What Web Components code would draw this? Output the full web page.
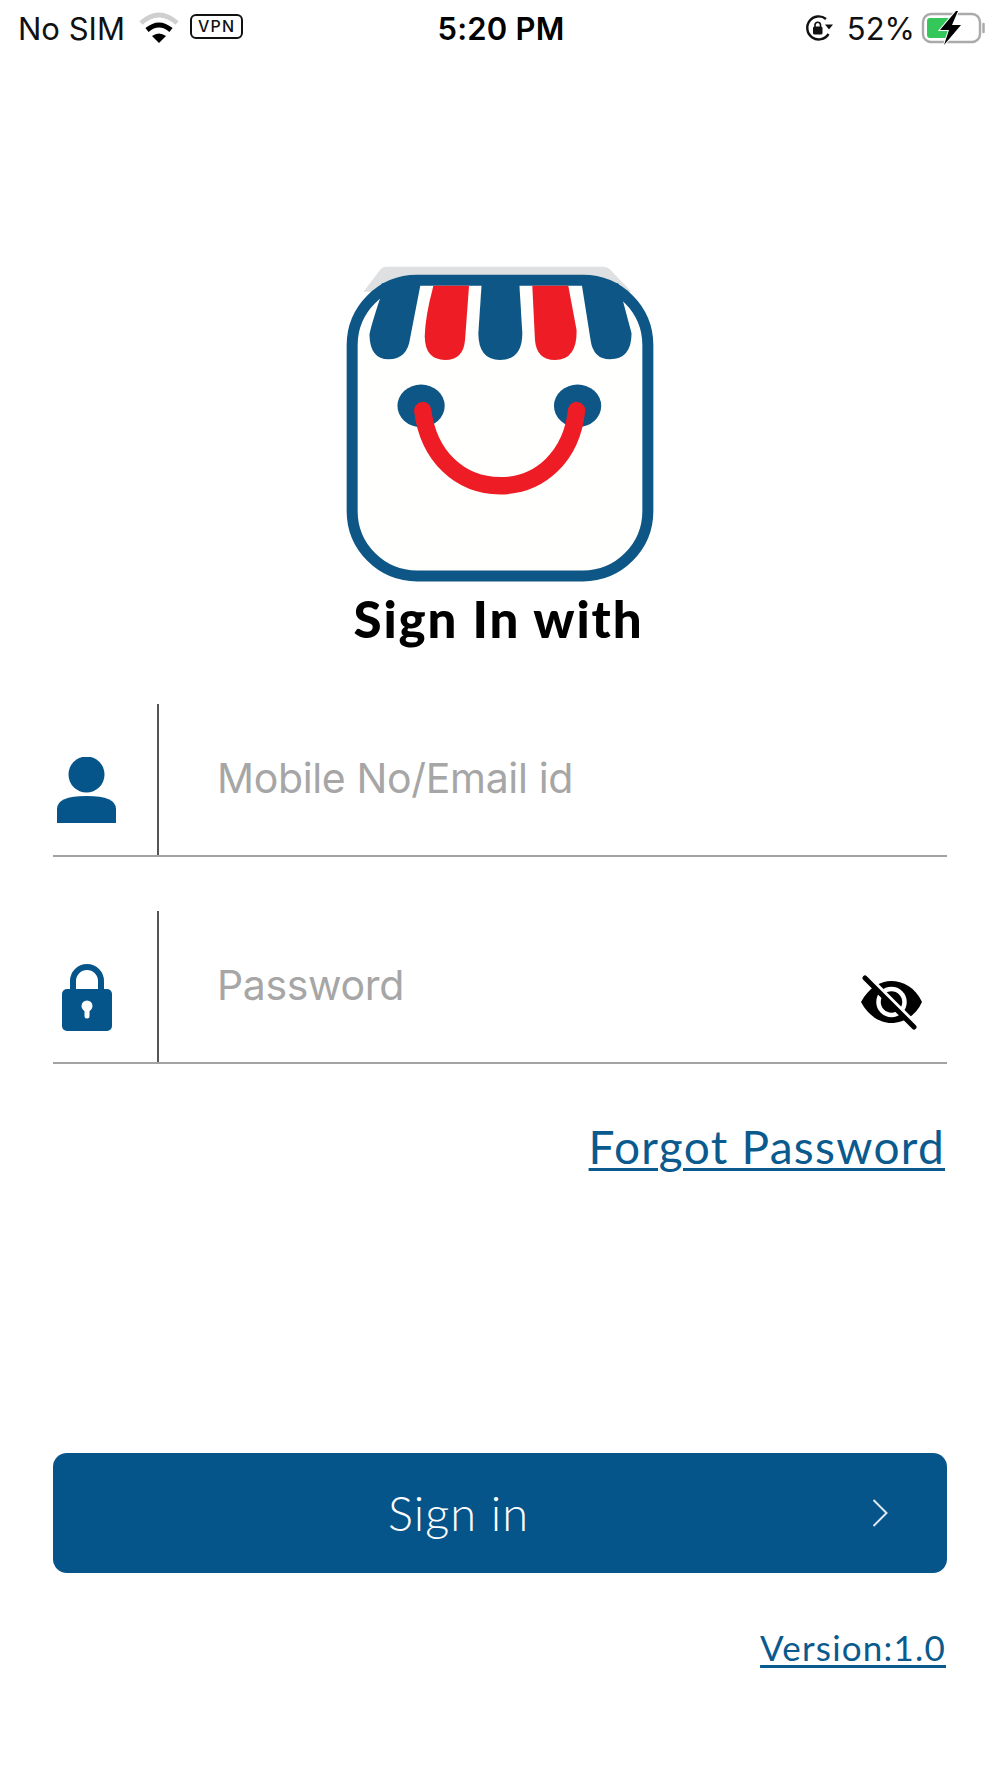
<!DOCTYPE html>
<html><head><meta charset="utf-8">
<style>
html,body{margin:0;background:#fff}
body{width:1000px;height:1778px;overflow:hidden;font-family:"Lato",sans-serif}
</style></head><body>
<login-page>
  <status-bar></status-bar>
  <app-logo></app-logo>
  <sign-title>Sign In with</sign-title>
  <login-field icon="person" placeholder="Mobile No/Email id"></login-field>
  <login-field icon="lock" placeholder="Password" eye></login-field>
  <forgot-link>Forgot Password</forgot-link>
  <sign-button>Sign in</sign-button>
  <version-link>Version:1.0</version-link>
</login-page>
<script>
function def(name,html,init){
  customElements.define(name,class extends HTMLElement{
    constructor(){super();const r=this.attachShadow({mode:'open'});r.innerHTML=html;if(init)init(this,r);}
  });
}
def('login-page',`<style>:host{display:block;width:1000px;height:1778px;background:#fff}</style><slot></slot>`);
def('status-bar',`<style>
:host{display:grid;grid-template-columns:1fr auto 1fr;align-items:center;height:56px;padding:0 14px 0 18px;box-sizing:border-box;font:400 31px "Inter",sans-serif;color:#111}
.l,.r{display:flex;align-items:center}
.r{justify-content:flex-end}
.time{font-weight:600;font-size:31px;color:#000;letter-spacing:.2px;margin-right:2px}
.vpn{font-size:16px;font-weight:500;line-height:21px;border:2px solid #111;border-radius:6px;padding:0 6px;letter-spacing:1.200px;margin-left:10px;margin-top:-3px}
svg{display:block}
</style>
<div class="l"><span>No SIM</span>
<svg style="margin-left:13px;margin-top:-1px" width="42" height="32" viewBox="0 0 42 32"><path d="M3 11Q21 -5 39 11" fill="none" stroke="#cfcfcf" stroke-width="5"/><path d="M9 18Q21 8 33 18" fill="none" stroke="#000" stroke-width="5"/><path d="M14 24Q21 19 28 24L21 31Z" fill="#000"/></svg>
<span class="vpn">VPN</span></div>
<div class="time">5:20 PM</div>
<div class="r">
<svg style="margin-right:13px" width="30" height="28" viewBox="0 0 30 28"><path d="M22 5A11.500 11.500 0 1 0 24.500 20" fill="none" stroke="#111" stroke-width="2.400"/><path d="M21 10.500h8l-4 5z" fill="#111"/><rect x="9" y="12.500" width="9.500" height="8" rx="1.500" fill="#111"/><path d="M11 13V10.500a2.800 2.800 0 0 1 5.500 0V13" fill="none" stroke="#111" stroke-width="1.600"/></svg>
<span>52%</span>
<svg style="margin-left:6px;margin-right:-1px" width="66" height="36" viewBox="0 0 66 36"><rect x="2" y="4" width="57" height="28" rx="8" fill="#fff" stroke="#aaa" stroke-width="2.400"/><rect x="6" y="8" width="25" height="20" rx="3" fill="#35c759"/><path d="M62.500 14v8" stroke="#aaa" stroke-width="2.500" stroke-linecap="round"/><path d="M35 1L19 20h9l-5 15 17-20h-9l6-14z" fill="#000" stroke="#fff" stroke-width="2" paint-order="stroke"/></svg>
</div>`);
def('app-logo',`<style>:host{display:block;height:333px;margin-top:194px}svg{display:block;margin-left:320px}</style>
<svg width="360" height="333" viewBox="0 0 1080 1000">
<path d="M130 125L178 62Q186 50 200 50H850Q864 50 874 62L935 125Z" fill="#dfe0e1"/>
<rect x="96" y="91" width="888" height="888" rx="195" fill="#fffffd" stroke="#0d5685" stroke-width="33"/>
<g fill="#0d5685">
<path d="M185 100H302L270 265Q262 328 205 328Q150 328 148 255Q150 235 185 130Z"/>
<path d="M485 100H598L607 250Q607 330 540 330Q475 330 475 250Z"/>
<path d="M785 100H895L935 250Q935 328 870 328Q820 328 812 270Z"/>
<ellipse cx="303" cy="468" rx="71" ry="64"/><ellipse cx="773" cy="468" rx="71" ry="64"/>
</g>
<g fill="#ee1c25">
<path d="M340 107H447L435 270Q430 330 375 330Q315 330 314 260Q315 200 340 107Z"/>
<path d="M637 107H745L770 240Q772 330 705 330Q650 330 645 270Z"/>
</g>
<path d="M308 482C325 620 420 708 540 708C660 708 755 620 770 482" fill="none" stroke="#ee1c25" stroke-width="52" stroke-linecap="round"/>
</svg>`);
def('sign-title',`<style>:host{display:block;height:121px;box-sizing:border-box;padding-top:6px;text-align:center;font:900 51px/60px "Lato",sans-serif;letter-spacing:1.900px;color:#000;margin-left:-3px}</style><slot></slot>`);
const icons={
person:`<svg style="margin-top:53px;margin-left:4px" width="59" height="67" viewBox="0 0 59 67"><circle cx="29.500" cy="17.500" r="18" fill="#05558b"/><path d="M0 66V52Q0 39 29.500 39Q59 39 59 52V66Z" fill="#05558b"/></svg>`,
lock:`<svg style="margin-top:53px;margin-left:9px" width="50" height="67" viewBox="0 0 50 67"><path d="M11 28V17a14 14 0 0 1 28 0v11" fill="none" stroke="#05558b" stroke-width="6"/><rect y="25" width="50" height="42" rx="5" fill="#05558b"/><circle cx="25" cy="42" r="5.500" fill="#fff"/><path d="M25 44v8" stroke="#fff" stroke-width="5" stroke-linecap="round"/></svg>`};
def('login-field',`<style>
:host{display:flex;height:153px;margin:0 53px 54px;border-bottom:2px solid #a3a3a3;box-sizing:border-box;position:relative}
.ic{width:106px;border-right:2px solid #555;box-sizing:border-box;flex:none}
.ic svg{display:block}
.ph{flex:1;font:400 41px/1 "Inter",sans-serif;color:#a6a6a6;padding:54px 0 0 58px;letter-spacing:-.35px}
.eye{position:absolute;left:804px;top:62px}
</style><div class="ic"></div><div class="ph"></div>`,(el,r)=>{
  queueMicrotask(()=>{
    r.querySelector('.ic').innerHTML=icons[el.getAttribute('icon')];
    r.querySelector('.ph').textContent=el.getAttribute('placeholder');
    if(el.hasAttribute('eye')){
      const d=document.createElement('div');d.className='eye';
      d.innerHTML=`<svg width="70" height="60" viewBox="0 0 70 60"><path d="M4 29C12 14 24 8 34 8C46 8 58 14 65 29C58 44 46 50 34 50C24 50 12 44 4 29Z" fill="#000"/><circle cx="34.500" cy="29" r="13" fill="none" stroke="#fff" stroke-width="4.500"/><path d="M12 5L61 54" stroke="#fff" stroke-width="5"/><path d="M8 5L57 54" stroke="#000" stroke-width="5" stroke-linecap="round"/></svg>`;
      r.appendChild(d);
    }
  });
});
def('forgot-link',`<style>:host{display:block;text-align:right;margin:0 55px 0 0;padding-top:1px;height:55px;font:400 46px/55px "Lato",sans-serif;letter-spacing:1.300px;color:#0a5a8e;text-decoration:underline;text-decoration-thickness:2.500px;text-underline-offset:4px}</style><slot></slot>`);
def('sign-button',`<style>
:host{display:flex;align-items:center;height:120px;margin:279px 53px 0;background:#05558b;border-radius:14px;color:#fff;font:300 47px "Lato",sans-serif;letter-spacing:1px;padding-right:59px}
.t{flex:1;text-align:center;padding-right:8px}
svg{display:block;flex:none}
</style><span class="t"><slot></slot></span><svg width="16" height="28" viewBox="0 0 16 28"><path d="M1.500 1L14.500 14L1.500 27" fill="none" stroke="#dfe8ef" stroke-width="2"/></svg>`);
def('version-link',`<style>:host{display:block;text-align:right;margin:53px 54px 0 0;font:400 35px/42px "Lato",sans-serif;letter-spacing:1.200px;color:#0a5a8e;text-decoration:underline;text-decoration-thickness:2.500px;text-underline-offset:4px}</style><slot></slot>`);
</script>
</body></html>
